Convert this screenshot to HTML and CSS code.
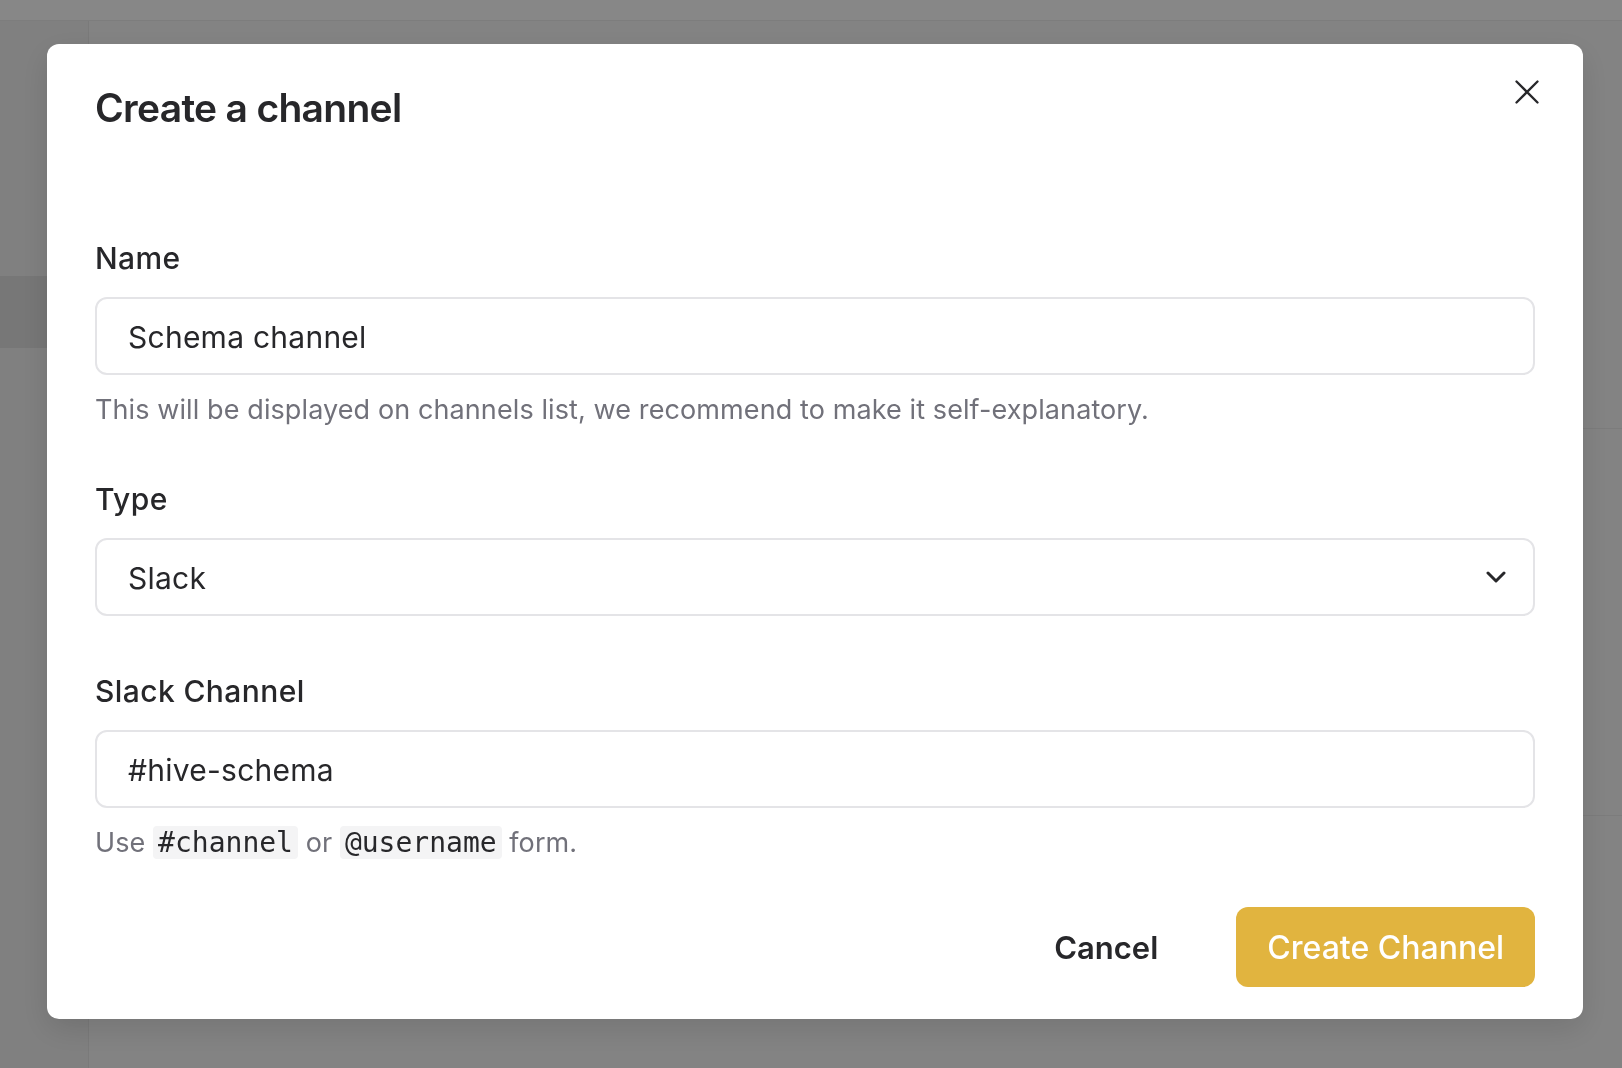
FILE: index.html
```html
<!DOCTYPE html>
<html lang="en">
<head>
<meta charset="utf-8">
<title>Create a channel</title>
<link rel="stylesheet" href="styles.css">
</head>
<body>
<div class="app">
  <header class="topbar"></header>
  <div class="app-body">
    <aside class="sidebar">
      <div class="side-gap"></div>
      <div class="side-item active"></div>
    </aside>
    <main class="content">
      <div class="panel-head"></div>
      <div class="panel-row"></div>
    </main>
  </div>
</div>
<div class="overlay"></div>
<div class="modal" role="dialog" aria-labelledby="modal-title">
  <h2 class="modal-title" id="modal-title">Create a channel</h2>
  <button class="close-btn" type="button" aria-label="Close">
    <svg width="24" height="24" viewBox="0 0 24 24" fill="none" stroke="#27272a" stroke-width="2.3" stroke-linecap="round"><path d="M1.5 1.5 22.5 22.5M22.5 1.5 1.5 22.5"/></svg>
  </button>
  <form class="form">
    <div class="field">
      <label class="label" for="name">Name</label>
      <input class="input" id="name" type="text" value="Schema channel">
      <p class="help">This will be displayed on channels list, we recommend to make it self-explanatory.</p>
    </div>
    <div class="field field--select">
      <label class="label" for="type">Type</label>
      <div class="select-wrap">
        <select class="input select" id="type"><option>Slack</option></select>
        <svg class="chevron" width="20" height="12" viewBox="0 0 20 12" fill="none" stroke="#27272a" stroke-width="3" stroke-linecap="round" stroke-linejoin="round"><path d="M2 2 10 10 18 2"/></svg>
      </div>
    </div>
    <div class="field">
      <label class="label" for="slack">Slack Channel</label>
      <input class="input" id="slack" type="text" value="#hive-schema">
      <p class="help">Use <code>#channel</code> or <code>@username</code> form.</p>
    </div>
    <div class="footer">
      <button class="btn btn-ghost" type="button">Cancel</button>
      <button class="btn btn-primary" type="submit">Create Channel</button>
    </div>
  </form>
</div>
</body>
</html>
```

FILE: styles.css
```css
html, body {
  margin: 0;
  padding: 0;
  height: 100%;
}

body {
  font-family: "Inter", "Noto Sans", sans-serif;
  background: #f7f7f7;
  overflow: hidden;
}

.app {
  height: 100vh;
  display: flex;
  flex-direction: column;
}

.topbar {
  height: 20px;
  background: #ffffff;
  border-bottom: 1px solid #ececec;
  box-shadow: 0 1px 3px rgba(0,0,0,0.06);
  flex: none;
}

.app-body {
  flex: 1;
  display: flex;
}

.sidebar {
  width: 88px;
  flex: none;
  background: #f1f1f1;
  border-right: 1px solid #e6e6e6;
}

.side-gap {
  height: 255px;
}

.side-item {
  height: 72px;
}

.side-item.active {
  background: #e0e0e0;
}

.content {
  flex: 1;
  background: #f8f8f8;
}

.panel-head {
  height: 407px;
  border-bottom: 1px solid #eaeaea;
}

.panel-row {
  height: 386px;
  border-bottom: 1px solid #eaeaea;
}

.overlay {
  position: fixed;
  inset: 0;
  background: rgba(0, 0, 0, 0.47);
}

.modal {
  position: fixed;
  left: 47px;
  top: 44px;
  width: 1536px;
  box-sizing: border-box;
  padding: 40px 48px 32px;
  background: #ffffff;
  border-radius: 12px;
  box-shadow: 0 10px 30px rgba(0,0,0,0.12);
  color: #27272a;
}

.modal-title {
  margin: 0;
  font-size: 39px;
  line-height: 48px;
  font-weight: 600;
  letter-spacing: -0.7px;
}

.close-btn {
  position: absolute;
  top: 36px;
  right: 44px;
  padding: 0;
  border: 0;
  background: none;
  width: 24px;
  height: 24px;
  display: flex;
}

.form {
  margin-top: 106px;
}

.field + .field {
  margin-top: 49px;
}

.field--select + .field {
  margin-top: 55px;
}

.label {
  display: block;
  font-size: 30px;
  line-height: 40px;
  font-weight: 500;
  letter-spacing: 0.4px;
  margin-bottom: 19px;
}

.input {
  display: block;
  width: 100%;
  height: 78px;
  box-sizing: border-box;
  border: 2px solid #e4e4e7;
  border-radius: 12px;
  padding: 2px 31px 0;
  font-family: inherit;
  font-size: 30px;
  letter-spacing: 0.25px;
  font-weight: 400;
  color: #27272a;
  background: #ffffff;
  outline: none;
}

.select-wrap {
  position: relative;
}

.select {
  appearance: none;
  -webkit-appearance: none;
}

.chevron {
  position: absolute;
  right: 29px;
  top: 33px;
  pointer-events: none;
}

.help {
  margin: 15px 0 0;
  font-size: 27px;
  letter-spacing: 0.1px;
  line-height: 40px;
  color: #71717a;
}

.help code {
  font-family: "DejaVu Sans Mono", "Liberation Mono", monospace;
  font-size: 28px;
  letter-spacing: 0;
  color: #27272a;
  background: #f4f4f5;
  border-radius: 4px;
  padding: 0 5px;
}

.footer {
  display: flex;
  justify-content: flex-end;
  align-items: center;
  gap: 47px;
  margin-top: 44px;
}

.btn {
  height: 80px;
  padding: 0 31px;
  border: 0;
  border-radius: 12px;
  font-family: inherit;
  font-size: 32px;
  font-weight: 500;
}

.btn-ghost {
  background: none;
  color: #27272a;
  font-size: 31px;
  font-weight: 600;
}

.btn-primary {
  background: #e1b43f;
  color: #ffffff;
}
```
